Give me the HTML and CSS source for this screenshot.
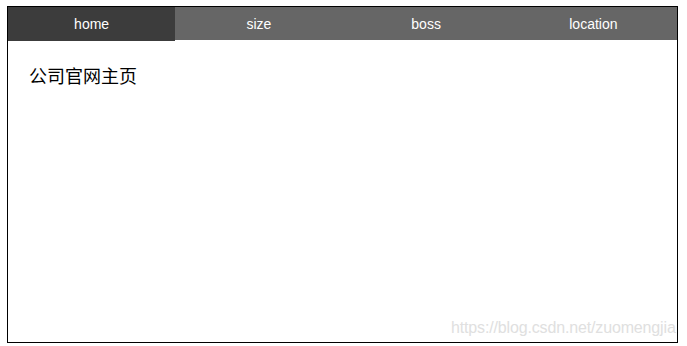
FILE: index.html
```html
<!DOCTYPE html>
<html>
<head>
<meta charset="utf-8">
<link rel="stylesheet" href="styles.css">
</head>
<body>
<div class="box">
  <ul class="tabs">
    <li class="tab active">home</li>
    <li class="tab">size</li>
    <li class="tab">boss</li>
    <li class="tab">location</li>
  </ul>
  <div class="content">公司官网主页</div>
</div>
<div class="watermark">https://blog.csdn.net/zuomengjia</div>
</body>
</html>
```
FILE: styles.css
```css
html, body { margin: 0; padding: 0; background: #fff; }
body { padding: 6px 0 0 7px; font-family: "Liberation Sans", Arial, sans-serif; }
.box {
  width: 669px;
  height: 335px;
  border: 1px solid #000;
  box-sizing: content-box;
}
.tabs {
  display: grid;
  grid-template-columns: repeat(4, 1fr);
  margin: 0;
  padding: 0;
  list-style: none;
  height: 33px;
  background: #666;
}
.tab {
  color: #fff;
  font-size: 14px;
  line-height: 34px;
  text-align: center;
}
.tab.active { background: #3c3c3c; }
.content {
  padding: 23px 0 0 21px;
  font-family: "Noto Sans CJK SC", "Liberation Sans", sans-serif;
  font-size: 18px;
  line-height: 24px;
  color: #000;
}
.watermark {
  position: absolute;
  left: 451px;
  top: 318px;
  white-space: nowrap;
  font-size: 16px;
  letter-spacing: -0.15px;
  line-height: 20px;
  color: #e0e0e0;
}
```
